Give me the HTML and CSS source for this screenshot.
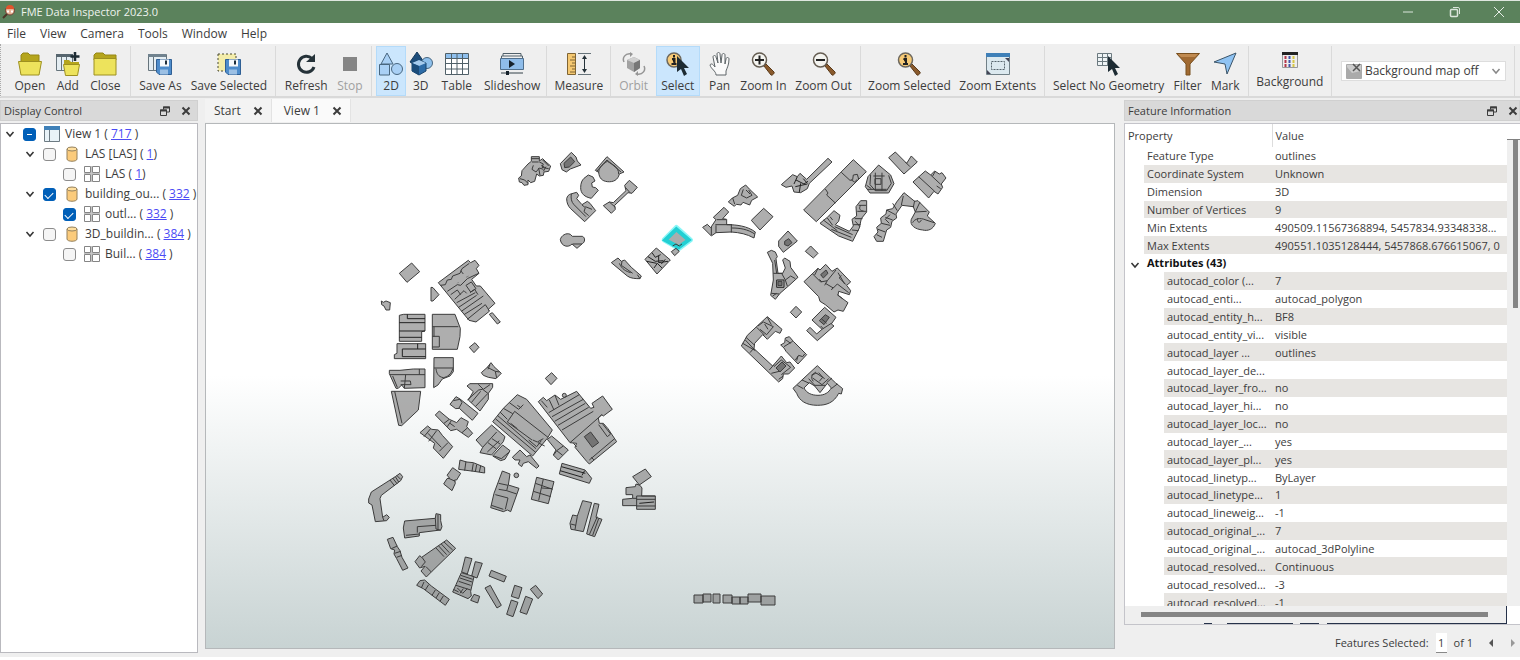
FILE: index.html
```html
<!DOCTYPE html>
<html lang="en">
<head>
  <meta charset="UTF-8">
  <meta name="viewport" content="width=device-width, initial-scale=1.0">
  <title>FME Data Inspector 2023.0</title>
  <link rel="stylesheet" href="styles.css">
</head>
<body>
  <svg class="defs" aria-hidden="true">
    <symbol id="i-close" viewBox="0 0 10 10"><path d="M1.5 1.5l7 7M8.500 1.500l-7 7" fill="none" stroke="currentColor" stroke-width="2"/></symbol>
    <symbol id="i-float" viewBox="0 0 10 10"><path d="M3.500 3.500V1h6v5H7" fill="none" stroke="currentColor"/><path d="M3 1.500h7" stroke="currentColor" stroke-width="2"/><path d="M.5 4h6v5.500h-6z" fill="none" stroke="currentColor"/><path d="M0 4.500h7" stroke="currentColor" stroke-width="2"/></symbol>
    <symbol id="i-chevron" viewBox="0 0 10 10"><path d="M1.500 3l3.500 4 3.500-4" fill="none" stroke="currentColor" stroke-width="1.500"/></symbol>
    <symbol id="i-view" viewBox="0 0 16 16"><path d="M.5.5h15v15H.5z" fill="#e9f3f8" stroke="#6d7b83"/><path d="M0 0h16v4H0z" fill="#3f80b8"/><path d="M5.500 4v11" stroke="#6d7b83"/></symbol>
    <symbol id="i-db" viewBox="0 0 12 16"><path d="M1 3v10c0 3 10 3 10 0V3" fill="#fbcb7c" stroke="#94805c"/><ellipse cx="6" cy="3" rx="5" ry="2" fill="#ffdf9f" stroke="#94805c"/></symbol>
    <symbol id="i-type" viewBox="0 0 16 16"><path d="M.5.5h6v6h-6zM8.500.5h7v6h-7zM.5 8.500h6v7h-6zM8.500 8.500h7v7h-7z" fill="#fff" stroke="#858585"/><path d="M7.500 0v16M0 7.500h16" stroke="#c4c4c4"/></symbol>
    <symbol id="i-floppy" viewBox="0 0 16 16"><path d="M.5.5h15v15H3l-2.500-2.500z" fill="#4e8ccb" stroke="#2f5f94"/><path d="M4 .5h9v7H4z" fill="#f5f8fb"/><path d="M9 1.500h2v4H9z" fill="#1c2d3c"/><path d="M4 10.500h8v5H4z" fill="#9cc0e4"/></symbol>
    <symbol id="i-handle" viewBox="0 0 24 24"><path d="M13 14l2-2 8 8c1 1-2 4-3 3z" fill="#8a5a2c" stroke="#5a3a1a"/></symbol>
    <symbol id="i-cursor" viewBox="0 0 24 24"><path d="M11 4v16l4-3 3 7 3-2-3-6h5z" fill="#1d2b33"/></symbol>
  </svg>

  <div class="app">
    <header class="titlebar">
      <svg class="logo" viewBox="0 0 14 14" aria-hidden="true"><path d="M1 13l5-5" stroke="#4b3526" stroke-width="2"/><circle cx="8" cy="5.500" r="4.500" fill="#e9b295" stroke="#694134"/><path d="M4 4a4 4 0 0 1 8 0z" fill="#e2552d"/><path d="M5 6.500h2M9 6.500h2" stroke="#fff" stroke-width="2"/></svg>
      <h1>FME Data Inspector 2023.0</h1>
      <div class="window-buttons">
        <button aria-label="Minimize"><svg viewBox="0 0 12 12"><path d="M1 6h10" stroke="#dbe5db"/></svg></button>
        <button aria-label="Restore"><svg viewBox="0 0 12 12"><rect x="1.500" y="3.500" width="7" height="7" rx="1" fill="none" stroke="#dbe5db" stroke-width="1.500"/><path d="M4 1.500h5a1.500 1.500 0 0 1 1.500 1.500v5" fill="none" stroke="#dbe5db"/></svg></button>
        <button aria-label="Close window"><svg viewBox="0 0 12 12"><path d="M1 1l10 10M11 1L1 11" stroke="#e6eee6"/></svg></button>
      </div>
    </header>

    <nav class="menubar">
      <a href="#">File</a>
      <a href="#">View</a>
      <a href="#">Camera</a>
      <a href="#">Tools</a>
      <a href="#">Window</a>
      <a href="#">Help</a>
    </nav>

    <div class="toolbar">
      <div class="group">
        <button class="tool"><svg viewBox="0 0 24 24"><path d="M3 10V3l2-2h5l2 2h9v8z" fill="#b5a51c" stroke="#958715"/><path d="M.5 9.500h23L21 23H3z" fill="#ede35c" stroke="#9d9020"/></svg>Open</button>
        <button class="tool"><svg viewBox="0 0 24 24"><path d="M.5 2.500h16v16H.5z" fill="#e4edf2" stroke="#66747c"/><path d="M0 2h17v3H0z" fill="#56656e"/><path d="M5.500 5v13M10.500 5v13" stroke="#66747c"/><path d="M8 12V8h5l2 2h8v4z" fill="#b5a51c"/><path d="M7.500 12.500h16l-2 11h-12z" fill="#ede35c" stroke="#9d9020"/><path d="M19 0v9M14.500 4.500h9" stroke="#1d2b33" stroke-width="2.500"/></svg>Add</button>
        <button class="tool"><svg viewBox="0 0 24 24"><path d="M1 8V3l2-2h7l2 2h11v5z" fill="#b5a51c" stroke="#958715"/><path d="M1 6.500h22V23H1z" fill="#ede35c" stroke="#9d9020"/></svg>Close</button>
      </div>
      <div class="group">
        <button class="tool"><svg viewBox="0 0 24 24"><path d="M.5 2.500h18v16H.5z" fill="#e4edf2" stroke="#66747c"/><path d="M0 2h18v3H0z" fill="#70828e"/><path d="M5.500 5v13" stroke="#66747c"/><use href="#i-floppy" x="8" y="7" width="16" height="16"/></svg>Save As</button>
        <button class="tool"><svg viewBox="0 0 24 24"><path d="M1 2h18v17H1z" fill="#f3ecaa" stroke="#4b4b30" stroke-dasharray="2 2"/><use href="#i-floppy" x="8" y="7" width="16" height="16"/></svg>Save Selected</button>
      </div>
      <div class="group">
        <button class="tool"><svg viewBox="0 0 24 24"><path d="M18 6.500A8 8 0 1 0 20 15" fill="none" stroke="#253239" stroke-width="3"/><path d="M12 10h9V2z" fill="#253239"/></svg>Refresh</button>
        <button class="tool" disabled><svg viewBox="0 0 24 24"><path d="M5 5h14v14H5z" fill="#858585"/></svg>Stop</button>
      </div>
      <div class="group group-view">
        <button class="tool tool-narrow selected"><svg viewBox="0 0 24 24"><g fill="#a9d0f5" stroke="#48667f"><path d="M8 1l6 11H2zM.5 12.500h10V23H.5z"/><circle cx="18" cy="17" r="5.500"/></g></svg>2D</button>
        <button class="tool tool-narrow"><svg viewBox="0 0 24 24"><path d="M8 0L1 10l5 3 9-3z" fill="#1d4d7b" stroke="#163a5c"/><circle cx="18" cy="11" r="5.500" fill="#8ec0ec" stroke="#48667f"/><path d="M3 11l7-3 7 3v8l-7 4-7-4z" fill="#2d6ca8" stroke="#18446c"/><path d="M3 11l7-3 7 3-7 3z" fill="#a6cbed"/><path d="M10 14v9l-7-4v-8z" fill="#1b4c7a"/></svg>3D</button>
        <button class="tool"><svg viewBox="0 0 24 24"><path d="M.5 1.500h23v21H.5z" fill="#fff" stroke="#506068"/><path d="M1 2h22v4H1z" fill="#8fc0ee"/><path d="M0 6.500h24M0 11.500h24M0 17h24M6.500 1v22M12 1v22M17.500 1v22" stroke="#506068"/></svg>Table</button>
        <button class="tool"><svg viewBox="0 0 24 24"><path d="M3 4V1.500h18V4M1.500 6V4h21v2" fill="none" stroke="#50606a"/><path d="M.5 6.500h23v11H.5z" fill="#8fbdea" stroke="#50708e"/><path d="M9 8l6 4-6 4z" fill="#16222c"/><path d="M1 21h22" stroke="#334048"/><path d="M6 19h3v4H6z" fill="#16222c"/></svg>Slideshow</button>
      </div>
      <div class="group">
        <button class="tool"><svg viewBox="0 0 24 24"><path d="M.5 1.500h8v21h-8z" fill="#f5c871" stroke="#7f6434"/><path d="M5 5h4M3 8h6M5 11h4M3 14h6M5 17h4M3 20h6" stroke="#7f6434"/><path d="M11 1.500h13M11 22.500h13" stroke="#66737a"/><path d="M17.500 5v14" stroke="#253239"/><path d="M15 7l2.500-4L20 7zM15 17l2.500 4 2.500-4z" fill="#253239"/></svg>Measure</button>
      </div>
      <div class="group group-camera">
        <button class="tool" disabled><svg viewBox="0 0 24 24"><path d="M2 10C0 6 3 1 9 2M22 14c2 4-1 9-7 8" fill="none" stroke="#959595" stroke-width="1.500"/><path d="M8 0l3 2-3 3zM16 19l-3 3 3 2z" fill="#959595"/><path d="M5 8l7-3 6 3v8l-6 4-7-4z" fill="#a2a2a2"/><path d="M5 8l7-3 6 3-6 3z" fill="#d0d0d0"/><path d="M12 11v9l6-4V8z" fill="#777"/></svg>Orbit</button>
        <button class="tool selected"><svg viewBox="0 0 24 24"><circle cx="8" cy="8" r="7" fill="#f7ca76" stroke="#6d685e" stroke-width="1.500"/><path d="M8 3v2.500M6 7h2.500v5M5.500 12h5" stroke="#222" stroke-width="2"/><use href="#i-cursor" width="24" height="24"/></svg>Select</button>
        <button class="tool"><svg viewBox="0 0 24 24"><path d="M8 23c0-4-5-6-6-10 1-2 3-1 5 2L5 5c0-2 3-2 3 0l2 6-1-9c0-2 3-2 3 0l1 9 1-8c0-2 3-2 3 0v9l1-5c0-2 3-2 3 0 0 6-2 9-3 12v4z" fill="#fafafa" stroke="#5e6568"/></svg>Pan</button>
        <button class="tool"><svg viewBox="0 0 24 24"><use href="#i-handle" width="24" height="24"/><circle cx="8.500" cy="8" r="7" fill="#f4f4f0" stroke="#655d52" stroke-width="1.500"/><path d="M4 8h9M8.500 3.500v9" stroke="#222" stroke-width="2"/></svg>Zoom In</button>
        <button class="tool"><svg viewBox="0 0 24 24"><use href="#i-handle" width="24" height="24"/><circle cx="8.500" cy="8" r="7" fill="#f4f4f0" stroke="#655d52" stroke-width="1.500"/><path d="M4 8h9" stroke="#222" stroke-width="2"/></svg>Zoom Out</button>
      </div>
      <div class="group">
        <button class="tool"><svg viewBox="0 0 24 24"><use href="#i-handle" width="24" height="24"/><circle cx="8.500" cy="8" r="7" fill="#f7ca76" stroke="#6d685e" stroke-width="1.500"/><path d="M8.500 3v2.500M6.500 7H9v5M6 12h5" stroke="#222" stroke-width="2"/></svg>Zoom Selected</button>
        <button class="tool"><svg viewBox="0 0 24 24"><path d="M.5 1.500h23v21H.5z" fill="#dce9ef" stroke="#718087"/><path d="M0 1h24v4H0z" fill="#3f80b8"/><path d="M5.500 9.500h13v8h-13z" fill="none" stroke="#56646c" stroke-dasharray="2 1"/><path d="M19 6h4v4zM1 18v4h4z" fill="#445"/></svg>Zoom Extents</button>
      </div>
      <div class="group">
        <button class="tool"><svg viewBox="0 0 24 24"><path d="M.5 1.500h14v12H.5z" fill="#eef3f5" stroke="#6b797f"/><path d="M0 5.500h15M0 9.500h15M5.500 1v12M10.500 1v12" stroke="#6b797f"/><use href="#i-cursor" width="24" height="24"/></svg>Select No Geometry</button>
        <button class="tool"><svg viewBox="0 0 24 24"><path d="M.5 1.500h23L14 12v11h-4V12z" fill="#a16a32" stroke="#79501f"/><path d="M2 2h20l-3 3H5z" fill="#c08a50"/></svg>Filter</button>
        <button class="tool"><svg viewBox="0 0 24 24"><path d="M1 10L23 1l-9 21-2-10z" fill="#8fc3f3" stroke="#3c5569" stroke-linejoin="round"/></svg>Mark</button>
      </div>
      <div class="group">
        <button class="tool tool-small"><svg viewBox="0 0 16 16"><path d="M.5.5h15v15H.5z" fill="#eee" stroke="#999"/><path d="M0 0h16v3H0z" fill="#222"/><path d="M3.500 4v12" stroke="#b43548" stroke-width="2" stroke-dasharray="3 1"/><path d="M7.500 4v12" stroke="#4054a8" stroke-width="2" stroke-dasharray="3 1"/><path d="M11.500 4v12" stroke="#d6c543" stroke-width="2" stroke-dasharray="3 1"/></svg>Background</button>
      </div>
      <div class="group">
        <label class="map-select">
          <svg class="map-icon" viewBox="0 0 16 16" aria-hidden="true"><path d="M.5 1.500h15v14H.5z" fill="#ccc" stroke="#aaa"/><path d="M1 4l5 6 9-2v7H1z" fill="#aaa"/><path d="M7 1l7 7M14 1L7 8" stroke="#555" stroke-width="1.500"/></svg>
          <select aria-label="Background map">
            <option>Background map off</option>
          </select>
          <svg class="arrow" aria-hidden="true"><use href="#i-chevron"/></svg>
        </label>
      </div>
    </div>

    <main class="workspace">
      <section class="dock dock-left">
        <div class="dock-title">
          <h2>Display Control</h2>
          <button aria-label="Float"><svg><use href="#i-float"/></svg></button>
          <button aria-label="Close panel"><svg><use href="#i-close"/></svg></button>
        </div>
        <ul class="tree">
          <li>
            <div class="node"><svg class="arrow"><use href="#i-chevron"/></svg><input type="checkbox" class="partial" id="n1"><svg class="icon"><use href="#i-view"/></svg><label for="n1">View 1 ( <a href="#">717</a> )</label></div>
            <ul>
              <li>
                <div class="node"><svg class="arrow"><use href="#i-chevron"/></svg><input type="checkbox" id="n2"><svg class="icon"><use href="#i-db"/></svg><label for="n2">LAS [LAS] ( <a href="#">1</a>)</label></div>
                <ul>
                  <li><div class="node leaf"><input type="checkbox" id="n3"><svg class="icon"><use href="#i-type"/></svg><label for="n3">LAS ( <a href="#">1</a>)</label></div></li>
                </ul>
              </li>
              <li>
                <div class="node"><svg class="arrow"><use href="#i-chevron"/></svg><input type="checkbox" id="n4" checked><svg class="icon"><use href="#i-db"/></svg><label for="n4">building_ou... ( <a href="#">332</a> )</label></div>
                <ul>
                  <li><div class="node leaf"><input type="checkbox" id="n5" checked><svg class="icon"><use href="#i-type"/></svg><label for="n5">outl... ( <a href="#">332</a> )</label></div></li>
                </ul>
              </li>
              <li>
                <div class="node"><svg class="arrow"><use href="#i-chevron"/></svg><input type="checkbox" id="n6"><svg class="icon"><use href="#i-db"/></svg><label for="n6">3D_buildin... ( <a href="#">384</a> )</label></div>
                <ul>
                  <li><div class="node leaf"><input type="checkbox" id="n7"><svg class="icon"><use href="#i-type"/></svg><label for="n7">Buil... ( <a href="#">384</a> )</label></div></li>
                </ul>
              </li>
            </ul>
          </li>
        </ul>
      </section>

      <section class="view">
        <div class="tabs">
          <div class="tab"><a href="#">Start</a><button aria-label="Close Start"><svg><use href="#i-close"/></svg></button></div>
          <div class="tab active"><a href="#">View 1</a><button aria-label="Close View 1"><svg><use href="#i-close"/></svg></button></div>
        </div>
        <div class="canvas">
          <svg class="map" viewBox="206 124 908 524" role="img" aria-label="Building outlines">
            <!-- north -->
            <g transform="translate(500 140) scale(.3333)">
              <path class="b" d="M94 50L118 50L118 63L128 56L138 66L152 78L146 94L132 96L130 106L118 108L110 102L104 124L92 128L84 120L84 134L72 136L66 128L58 126L56 114L64 108L66 92L84 72L94 64z"/>
              <path class="l" d="M94 56h24M96 66h20M118 66l12 6-4 10 20 4M100 76l-4 12 12 8 10-12 12 4M116 84l4 22M128 60l18 18M130 94l8-14M60 116l14 4 10 10M124 76l10 6"/>
              <path class="b" d="M181 71l33-34 14 14 4 12 11 12-32 12-12 9-13-7z"/><path class="d" d="M192 70l20-19 12 14-16 16-14 2z"/>
              <path class="b" d="M286 91l35-41 51 46-14 6c-4 18-18 25-36 23-16-2-24-10-26-28z"/>
              <path class="l" d="M290 94l31-34 42 36M296 98c0-12 8-24 26-34 16 10 34 16 34 38"/>
              <path class="b" d="M252 115l13-10 14 6 6 12-10 6 2 12 10 2 8 8-21 24c-20-4-32-14-32-32 0-14 4-22 10-28z"/>
              <path class="b" d="M200 176C202 168 206 164 212 162L230 157L236 166L230 176L246 194L262 184L270 190L287 212L254 245L212 206C204 198 200 188 200 176z"/>
              <path class="l" d="M214 162c-2 12 0 24 8 32l36 36M246 195l10 8-4 12 14 12M256 200l20 8"/>
              <path class="b" d="M310 197L328 186L340 188L378 152L374 136L388 121L412 142L396 160L384 158L344 196L346 208L334 220z"/>
              <path class="l" d="M328 186l18 16M376 142l14 16"/>
              <path class="b" d="M181 299C183 287 199 277 211 283L217 289L247 289C257 293 255 307 247 311L231 325L216 312C206 324 184 320 181 299z"/>
              <path class="l" d="M218 312h28"/>
              <path class="glow" d="M492 300l37-38 43 38-35 26z"/>
              <path class="pick" d="M496 300l33-32 37 32-30 22z"/>
              <path class="b" d="M514 335l14-10 10 9-14 13z"/>
              <path class="l" d="M518 318l10-6 10 6 8-6"/>
              <path class="b" d="M435 358l34-34 42 36-40 42z"/>
              <path class="l edge" d="M444 350l22 14 24-2M456 338l10 14 16-8M440 364l30 6M476 348v20l28-4M484 372l12-14M462 384l10-14 14 14"/>
              <path class="b" d="M334 368L354 354L364 364L374 360L394 382L424 408L420 416C408 416 392 416 382 408z"/>
              <path class="l" d="M358 370c8 18 20 24 34 28M366 364l-2 12 34 24M412 404l8 12"/>
            </g>
            <!-- north east -->
            <g transform="translate(690 140) scale(.3333)">
              <path class="b" d="M274 134L308 104L322 110L330 100L350 118L414 55L426 66L358 130L352 146L332 158L312 156L306 138L288 142z"/>
              <path class="l edge" d="M322 110l-10 22M318 120l24 12 12-8M316 140l36-8M332 130l-4 26M340 116l12 14"/>
              <path class="b" d="M341 210l149-151 39 36-150 150z"/>
              <path class="l" d="M406 147l8 12-4 6 26 24M454 97l26 24 8-2 2-14 12-2 4 14M484 120l10 6 8-8"/>
              <path class="b" d="M526 140l8-30 32-35 36 30 10 26-16 28h-56z"/>
              <path class="l" d="M542 104l-2 30 16 18h34l14-22-8-24M556 98v54M576 98v54M550 108h34M555 116h18v17h-18zM532 148h58M530 136l14 10"/>
              <path class="b" d="M596 53l20-17 34 34 14-22 18 18-40 36z"/><path class="l" d="M646 66l14 14"/>
              <path class="b" d="M669 126L706 93L722 105L734 93L748 102L756 98L768 114L754 132L758 142L744 162L732 154L716 174z"/>
              <path class="l" d="M686 110l48 44M722 105l30 28M736 94l-8 14M740 138l12 8"/>
              <path class="b" d="M115 186l12-12 16-8 8-20 16-11 12 13 24 23-18 10-6 14-20-8-6 8-14-2-6 6z"/>
              <path class="l" d="M128 174l6 18M160 148l-6 18 16 8 16-8-10-16M168 150l12 12"/>
              <path class="b" d="M184 241l37-36 28 25-39 40z"/>
              <path class="b" d="M38 262L52 253L62 263L78 239L70 232L102 202L116 216L98 236L110 238L110 254C140 254 172 258 196 276L192 294C170 282 150 278 124 276L78 278L64 288z"/>
              <path class="l" d="M80 239h28M76 254h50M78 256v22M124 254v24M126 264c24 0 48 4 68 18M64 261v24"/>
              <path class="b" d="M390 250L412 232L432 212L450 226L446 244L436 254L478 274L490 258L486 238L500 228L498 200L512 182L530 182L530 216L514 236L508 264L488 304L446 288z"/>
              <path class="l" d="M400 240l42 32M412 234l16 22M434 260l54 24M424 268l60 24M506 196h22M502 214h26M494 236h24M490 254h22M486 270l20 2M512 196c-8 12 2 18 8 16M496 244l14 16M420 230l8 10"/>
              <path class="b" d="M552 290L564 276L560 262L574 250L572 234L588 222L590 210L608 206L620 186L642 158L674 184L684 182L718 216L712 228L736 250C730 268 714 274 698 270C676 268 658 256 664 238L676 216L670 200L636 196L618 222L620 234L606 244L602 262L590 270L580 304L560 304z"/>
              <path class="l" d="M608 190l14 22M640 168l-6 28M674 182l-4 20M690 186l-14 30 34-2M590 210l26 14M586 232l22 8M574 250l26 6M564 268l22 8M560 284l16 8M600 224l-14 14 12 12M668 248c6-12 22-16 40-8l24 8M684 234c-6 12 6 18 10 6"/>
            </g>
            <!-- east -->
            <g transform="translate(730 230) scale(.3333)">
              <path class="b" d="M146 33l28-30 28 30-42 34-14-18z"/><path class="d" d="M164 34l12-8 10 12-12 10-10-4z"/>
              <path class="b" d="M226 64l16-16 22 22-14 14z"/>
              <path class="b" d="M112 67L124 61L136 66L142 80L138 86L144 130L158 130L166 114L158 90L164 84L180 94L182 112L204 142L180 164L150 190L136 208L122 196L130 150L128 100z"/>
              <path class="l" d="M130 130h28M134 90l6 40M124 190l24 2M166 150l6 18M156 132l10 18 16-12 14 8M128 198l12-8"/>
              <path class="l edge" d="M140 150h22v22h-22z"/><path class="d" d="M144 154h12v13h-12z"/>
              <path class="b" d="M222 155L264 115L270 120L287 103L306 124L322 114L362 156L350 166L362 182L358 194L326 184L324 196L354 218L340 244L324 240L312 246L286 224L270 214L266 200z"/>
              <path class="l" d="M248 132l24 24 20-4M264 115l-10 20M292 152l26-32M286 160l24 14 12-12 34 26M292 152l-8 14M324 128l20 34M334 136l-6 8 20 20M310 172l-6 8M338 206l-16-12M268 148l8 8"/>
              <path class="d" d="M272 134l16-14 6 10-14 14z"/>
              <path class="b" d="M246 270L284 232L318 262L304 282L312 288L262 332L230 302L240 292L260 312L276 298z"/>
              <path class="d" d="M268 272l18-18 12 8-16 22z"/><path class="l" d="M276 298l28-18M272 288l8 8M274 266l16 14"/>
              <path class="b" d="M181 247l17-18 17 17-17 18z"/>
              <path class="b" d="M34 348L52 316L84 286L112 260L156 298L150 310L136 304L112 328L98 314L74 340L72 356L128 408L154 378L170 398L180 396L194 414L176 432L160 432L158 446L146 456z"/>
              <path class="l" d="M48 322l24 22M80 292l24 24M84 288l16-12 30 14-20 24-20-16M104 282l10 16M112 262l12 22M38 340l38 22M46 330l28 30M60 368l12-14M124 430l24-6M118 420l14-16M132 410l22-20 28 22-28 22M146 448l14-10"/>
              <path class="d" d="M138 414l18-18 12 12-18 18z"/>
              <path class="b" d="M152 345L164 338L166 324L178 320L190 334L230 374L204 402L168 364L162 354z"/><path class="l" d="M162 350l26-16M168 330l14 10M196 390l10-14 12 4 6-8M204 378l-4 14"/>
              <path class="b" fill-rule="evenodd" d="M189 475L262 407L316 458L338 476L334 492L326 490C312 518 290 526 262 526C228 526 208 512 200 490zM222 474C230 490 246 496 264 496C284 496 296 488 304 474L292 460L270 488L254 468L238 458z"/>
              <path class="l" d="M202 466l18 10M216 450l22 10M304 476l18-14M290 458l16-14M236 446l18 20M262 430c-16 0-22 12-12 24M248 444l28 20 20-18M260 430l24 16M268 454l10-12-12-14M252 466h34M244 436l14-10"/>
            </g>
            <!-- west -->
            <g transform="translate(360 250) scale(.3333)">
              <path class="b" d="M118 70l37-31 24 26-38 32zM64 153l6 4 8-4 13 5-2 22H78l-6-12-7-4zM213 112l6 1 18 21-18 19h-6z"/>
              <path class="b" d="M235 98l90-67 7 7 13-7 12 15-8 10 8 14-22 18 14 20h12l44 52-20 18 3 6-40 32-21-5z"/>
              <path class="l" d="M242 106l14-2 6-14 12-2 4-10 22-8 6-14 22-16M262 124l30-20 10 2 20-20 34-16M302 62l8 10M272 134l20-14 10 14M284 148l28-26 8 8M290 158l56-30M296 172l54-36M304 184l66-46M312 194l54-34M322 208l54-44 12 18M318 106l16-10 14 20-16 10zM330 128l14-10 10 16"/>
              <path class="edge" d="M318 82l8-4M292 100l4-4"/>
              <path class="b" d="M388 193l9-5 24 28-9 6zM118 196l13-3h64v50l-10 2v29h-67z"/>
              <path class="l edge" d="M118 218h77M118 243h77M142 193v13h53M118 262h67"/>
              <path class="b" d="M217 193h68l16 42-1 25-8 38h-75z"/><path class="l" d="M217 230h78M222 230v30M217 259h21v32h-21"/>
              <path class="b" d="M111 281h86v45h-94v-12l8-4z"/><path class="l edge" d="M197 297h-70v23h70M173 281v16"/>
              <path class="b" d="M222 323h58v42l-10 13-23 9-13 18-13 8z"/><path class="l" d="M222 354h58M228 356c2 14 6 24 22 27 12-2 24-10 28-27"/>
              <path class="b" d="M88 361h32l40-4h35v56l-62 2-8-10-10 10h-7l-20-44z"/><path class="l" d="M90 374h105M178 357v17M137 374l-4 41M122 393h29l2 11h-31M98 378l14 34"/>
              <path class="b" d="M94 424h88l-7 56-50 47-9-1z"/><path class="l" d="M104 424l22 96"/>
              <path class="b" d="M328 292l17-14 12 14-15 16zM364 368l18-16 11-14 9 12 22 20-16 16-23-4-15-6z"/><path class="l" d="M382 352l24 12 4 20M390 344l-6 14M406 364l12 2"/>
              <path class="b" d="M321 408l9-7h68v11l-13 18v18l-25 35-35-33 15-25z"/><path class="l" d="M322 450l34-30 12-2 18 14M355 403l15 15 20-14M334 458l28-34M346 470l36-38"/>
              <path class="b" d="M270 463l18-23 12 7 54 43-17 21-39-36-11 1z"/><path class="l" d="M280 452l20-4 6 10-10 18"/>
              <path class="b" d="M226 495l12-12 30 25 22 10 13-15 22 12-5 15 18 20-13 12-35-24-18 4z"/><path class="l" d="M252 520l16-12M262 530l12-18M270 520l14 10M306 548l16-14"/>
              <path class="b" d="M180 548l23-20 12 10 20 2 12 16 31 34-28 35-30-31 4-14z"/><path class="l" d="M192 560l20-24M206 574l24-32M204 550l40 42M238 604l26-26"/>
            </g>
            <!-- centre -->
            <g transform="translate(470 360) scale(.3333)">
              <path class="b" d="M226 55l19-17 16 17-18 19z"/>
              <path class="b" d="M68 185l32-40 42-41 28 14 77 92-15 25-44 53z"/>
              <path class="l" d="M76 176l122 102M82 166l116 100M112 186l22-32 100 78M112 186l74 54M90 156l22 22M100 145l28 16M118 128l28 20 14-14M142 136l12 8M176 240l24 20 14-18M122 190l20 16M204 248l20 10M188 240l14 6 18-10"/>
              <path class="b" d="M232 238l13-10 50 42-30 30-15-15 8-15z"/><path class="l" d="M252 284l8-12 20-14M260 272l18 14"/>
              <path class="b" d="M18 240l47-45 40 35-5 15-35 40-35-7 8-16z"/><path class="l" d="M38 262l42-46M52 276l36-34M66 236l24 16M54 248l24 18"/>
              <path class="b" d="M68 288l30-33 22 17-15 26-13 4zM127 292l23-22 20 20 10-5 27 33-7 7-25-20-15 5-5 10-10-8 5-12h-15z"/><path class="l" d="M72 288l22 8 24-20"/>
              <path class="b" d="M205 125L220 112L230 122L255 105L272 118L320 94L362 145L372 142L366 130L398 108L427 148L400 168L395 164L385 174L388 190L400 190L414 206L440 245L358 312L350 304L315 262L320 250L300 248z"/>
              <path class="d" d="M343 230l19-14 24 32-19 14z"/>
              <path class="l" d="M236 158l92-54M246 170l94-52M254 184l92-54M264 196l92-54M276 210l94-56M300 248l96-84M214 122l18 20M238 120l14 30M255 106l12 30M386 194l26 36 10-8-24-30M358 300l76-64M310 250l10 10M364 292l8 8"/>
              <circle class="b" cx="283" cy="106" r="6"/><circle class="b" cx="139" cy="346" r="7"/>
              <path class="b" d="M276 310l69 20 20 25-7 15-90-28z"/><path class="l edge" d="M274 320l72 20M270 332l68 20M336 346l8-14"/>
              <path class="b" d="M97 333l23 9-5 33 32 10-25 70-10-5-12 5-38-12 10-43z"/><path class="l" d="M86 370l28 6-4 16-24-4M110 392l30 10M76 404l38 10-8 34M64 436l36 12"/>
              <path class="b" d="M200 352l52 13-17 66-51-13z"/><path class="l" d="M220 357l-14 64M196 370l52 18M190 394l52 16M216 384l30 2"/>
              <path class="b" d="M338 422L365 428L340 515L315 510L303 508L300 490L308 465L322 468zM373 430L387 433L378 472L396 478L374 530L350 522z"/><path class="l" d="M322 469l-7 40M302 492l16 4M382 470l-24 54M386 476l-18 50"/>
              <path class="b" d="M488 350l38-23 18 23-36 25zM468 383l28-3 2-8 12 4 6 8-1 24h41v40h-56v-11h-42v-19l30-3v-11h-20z"/><path class="l" d="M500 408h56M500 438h56M500 408v30M488 415h12M500 418h56"/><path class="l edge" d="M508 430l44-4"/>
            </g>
            <!-- south west -->
            <g transform="translate(350 450) scale(.3333)">
              <path class="b" d="M64 126l72-46 14-10 8 10-6 12-58 44-4 10 8 56 12-8 8 8-8 10-34 3-10-50-10-6v-12z"/><path class="l" d="M120 90l14 18M128 84l14 18M136 80l10 16M140 76l12 12M98 202l4 10"/>
              <path class="b" d="M330 30l20 6 20 2 34 14v17l-32-5-46-6zM291 76l17-23 24 17-12 20h-6l2 10-10 22-25-20 10-16 8-2z"/><path class="l" d="M348 34l-4 28M370 40l-4 24M380 44l-4 22M392 48l-4 18M294 84l22 10"/>
              <path class="b" d="M164 213l92-8 2-14 14 3v18l4 18-4 10-64 8v10l-44 6-4-30z"/><path class="l" d="M256 205l2 32 14 4M202 248v-18l56-4M168 256l40-4M264 194v46"/>
              <path class="b" d="M112 268L129 262L142 290L150 302L156 322L174 354L158 361L140 326L132 312L134 300L122 296z"/><path class="l" d="M124 296l18-8M134 310l18-6M140 322l16-6"/>
              <path class="b" d="M195 335l14-18 6 5 75-52 27 25-72 70-16 16-16-18 12-14-16 5z"/><path class="l" d="M274 282l24 26M266 288l24 26M258 294l24 26M282 276l26 24M216 322l10 14-12 14M228 350l16 16"/>
              <path class="b" d="M200 406L210 392L224 390L244 408L298 448L286 466L220 416z"/><path class="l" d="M222 396l-8 18M236 404l-10 16M256 420l-10 16M268 428l-10 16M280 438l-10 16"/>
              <path class="b" d="M346 321l20 5-14 46-17-6zM376 335l21 5-16 44-16-6z"/>
              <path class="b" d="M334 368l38 12-10 44 2 14-10 8-46-20 10-22z"/><path class="l" d="M332 376l36 12M330 384l36 12M326 394l36 12M318 406l44 14M322 414l16 16 14-14M310 418l16 8M330 430l10-14"/>
              <path class="b" d="M372 433l17 6-6 20-21-8zM424 361l45 18-7 17-45-18zM405 414l16-8 33 60-13 8zM494 406l22 7-10 33-22-7zM484 450l20 7-15 43-19-7zM527 439l21 8-18 46-20-7zM541 418l16-12 21 26-14 14z"/>
            </g>
            <!-- south row -->
            <path class="b" d="M694 595h9v8h-9zM703 594h8v8h-8zM713 594h7v9h-7zM723 595h9v8h-9zM732 597h8v7h-8zM740 597h8v7h-8zM748 594h13v8h-13zM761 596h14v9h-14z"/>
          </svg>
        </div>
      </section>

      <section class="dock dock-right">
        <div class="dock-title">
          <h2>Feature Information</h2>
          <button aria-label="Float"><svg><use href="#i-float"/></svg></button>
          <button aria-label="Close panel"><svg><use href="#i-close"/></svg></button>
        </div>
        <div class="info">
          <div class="info-scroll">
            <table class="properties">
              <thead>
                <tr><th>Property</th><th>Value</th></tr>
              </thead>
              <tbody>
                <tr><td>Feature Type</td><td>outlines</td></tr>
                <tr class="alt"><td>Coordinate System</td><td>Unknown</td></tr>
                <tr><td>Dimension</td><td>3D</td></tr>
                <tr class="alt"><td>Number of Vertices</td><td>9</td></tr>
                <tr><td>Min Extents</td><td>490509.11567368894, 5457834.93348338...</td></tr>
                <tr class="alt"><td>Max Extents</td><td>490551.1035128444, 5457868.676615067, 0</td></tr>
                <tr class="section"><td colspan="2"><svg class="arrow"><use href="#i-chevron"/></svg>Attributes (43)</td></tr>
              </tbody>
              <tbody class="attributes">
                <tr class="alt"><td>autocad_color (...</td><td>7</td></tr>
                <tr><td>autocad_enti...</td><td>autocad_polygon</td></tr>
                <tr class="alt"><td>autocad_entity_h...</td><td>BF8</td></tr>
                <tr><td>autocad_entity_vi...</td><td>visible</td></tr>
                <tr class="alt"><td>autocad_layer ...</td><td>outlines</td></tr>
                <tr><td>autocad_layer_de...</td><td></td></tr>
                <tr class="alt"><td>autocad_layer_fro...</td><td>no</td></tr>
                <tr><td>autocad_layer_hi...</td><td>no</td></tr>
                <tr class="alt"><td>autocad_layer_loc...</td><td>no</td></tr>
                <tr><td>autocad_layer_...</td><td>yes</td></tr>
                <tr class="alt"><td>autocad_layer_pl...</td><td>yes</td></tr>
                <tr><td>autocad_linetyp...</td><td>ByLayer</td></tr>
                <tr class="alt"><td>autocad_linetype...</td><td>1</td></tr>
                <tr><td>autocad_lineweig...</td><td>-1</td></tr>
                <tr class="alt"><td>autocad_original_...</td><td>7</td></tr>
                <tr><td>autocad_original_...</td><td>autocad_3dPolyline</td></tr>
                <tr class="alt"><td>autocad_resolved...</td><td>Continuous</td></tr>
                <tr><td>autocad_resolved...</td><td>-3</td></tr>
                <tr class="alt"><td>autocad_resolved...</td><td>-1</td></tr>
              </tbody>
            </table>
          </div>
          <div class="vbar"><div class="thumb"></div></div>
          <div class="hbar"><div class="thumb"></div></div>
        </div>
        <footer class="statusbar">
          <label for="feature-no">Features Selected:</label>
          <input id="feature-no" type="text" value="1">
          <span>of 1</span>
          <button aria-label="Previous feature"><svg viewBox="0 0 8 8"><path d="M6 0v8L2 4z" fill="#555"/></svg></button>
          <button aria-label="Next feature" disabled><svg viewBox="0 0 8 8"><path d="M2 0v8l4-4z" fill="#999"/></svg></button>
        </footer>
      </section>
    </main>
  </div>
</body>
</html>
```

FILE: styles.css
```css
* {
  box-sizing: border-box;
}
body {
  margin: 0;
  background: #fff;
  color: #3c3c3c;
  font-family: "Open Sans", "Noto Sans", sans-serif;
  font-size: 12px;
  line-height: 16px;
}
h1, h2 {
  margin: 0;
  font-size: inherit;
  font-weight: normal;
}
a {
  color: inherit;
  text-decoration: none;
}
button {
  padding: 0;
  border: 0;
  background: none;
  color: inherit;
  font: inherit;
}
button svg {
  display: block;
}
.defs {
  position: absolute;
  width: 0;
  height: 0;
}
.app {
  display: flex;
  flex-direction: column;
  height: 100vh;
  padding-bottom: 3px;
}
.arrow {
  width: 10px;
  height: 10px;
  color: #333;
}

/* title and menu */
.titlebar {
  display: flex;
  align-items: center;
  gap: 5px;
  height: 23px;
  padding-left: 2px;
  border-top: 1px solid #dfe7df;
  background: #5b825c;
  color: #eef3ee;
  font-size: 11px;
}
.titlebar h1 {
  flex: 1;
}
.logo {
  width: 14px;
  height: 14px;
}
.window-buttons {
  display: flex;
}
.window-buttons button {
  display: flex;
  justify-content: center;
  width: 47px;
}
.window-buttons button:last-child {
  width: 42px;
}
.window-buttons svg {
  width: 12px;
  height: 12px;
}
.menubar {
  display: flex;
  gap: 14px;
  padding: 3px 7px 2px;
}

/* toolbar */
.toolbar {
  display: grid;
  grid-template-columns: 126fr 145fr 96fr 175fr 64fr 249fr 184fr 204fr 83fr 183fr;
  padding: 2px 5px 0 4px;
  border-left: 1px dotted #aaa;
  border-bottom: 2px solid #d9d9d9;
  background: #efefef;
}
.group {
  display: flex;
  align-items: stretch;
  justify-content: space-evenly;
  min-width: 0;
  border-right: 1px solid #dadada;
}
.group-view {
  justify-content: flex-start;
  padding-left: 4px;
}
.tool {
  display: flex;
  flex-direction: column;
  align-items: center;
  gap: 2px;
  height: 50px;
  padding-top: 5px;
  border: 1px solid transparent;
  white-space: nowrap;
}
.group-view .tool {
  padding-right: 5px;
  padding-left: 5px;
}
.tool svg {
  flex: none;
  width: 24px;
  height: 24px;
}
.group .tool-narrow {
  width: 31px;
  padding-right: 0;
  padding-left: 0;
}
.tool-small svg {
  width: 16px;
  height: 16px;
}
.tool-small {
  gap: 6px;
}
.tool:disabled {
  color: #a0a0a0;
}
.tool.selected {
  border-color: #b4dbfa;
  background: #cbe6fd;
}
.group-camera .selected {
  width: 44px;
}
.map-select {
  display: flex;
  align-items: center;
  align-self: center;
  flex: 1;
  gap: 3px;
  height: 20px;
  margin: 0 8px 0 9px;
  padding: 0 4px;
  border: 1px solid #ddd;
  background: #fff;
}
.map-icon {
  width: 16px;
  height: 16px;
}
.map-select select {
  flex: 1;
  min-width: 0;
  padding: 0;
  border: 0;
  background: none;
  color: inherit;
  font: inherit;
  appearance: none;
}
.map-select .arrow {
  color: #888;
}

/* docks */
.workspace {
  display: flex;
  flex: 1;
  min-height: 0;
  background: #efefef;
}
.dock {
  display: flex;
  flex-direction: column;
  padding-top: 2px;
}
.dock-left {
  width: 198px;
  padding-bottom: 4px;
}
.dock-right {
  width: 396px;
  font-size: 11px;
}
.dock-title {
  display: flex;
  align-items: center;
  gap: 11px;
  height: 21px;
  margin-bottom: 2px;
  padding: 0 6px 0 3px;
  border: 1px solid #d0d0d0;
  background: #d9d9d9;
  font-size: 11px;
}
.dock-title h2 {
  flex: 1;
}
.dock-right .dock-title {
  padding-right: 1px;
}
.dock-title svg,
.tab svg {
  width: 10px;
  height: 10px;
}

/* layer tree */
.tree {
  flex: 1;
  border: 1px solid #b9b9be;
  background: #fff;
}
.tree,
.tree ul {
  margin: 0;
  padding: 0;
  list-style: none;
}
.tree ul {
  padding-left: 20px;
}
.node {
  display: grid;
  grid-template-columns: 18px 20px 26px auto;
  align-items: center;
  justify-items: center;
  justify-content: start;
  height: 20px;
  white-space: nowrap;
}
.node.leaf {
  grid-template-columns: 20px 26px auto;
  padding-left: 18px;
}
.node .icon {
  width: 16px;
  height: 16px;
}
.node a {
  color: #4b4bf5;
  text-decoration: underline;
}
.node input {
  width: 13px;
  height: 13px;
  margin: 0;
  border: 1px solid #8c8c8c;
  border-radius: 3px;
  background: #f5f5f5;
  appearance: none;
}
.node input:checked,
.node input.partial {
  display: grid;
  place-items: center;
  border-color: #005fb8;
  background: #005fb8;
}
.node input:checked::before {
  content: "";
  width: 7px;
  height: 4px;
  border: solid #fff;
  border-width: 0 0 1px 1px;
  transform: rotate(-45deg);
}
.node input.partial::before {
  content: "";
  width: 5px;
  height: 1px;
  background: #fff;
}

/* map view */
.view {
  display: flex;
  flex: 1;
  flex-direction: column;
  min-width: 0;
  padding: 1px 9px 8px 7px;
}
.tabs {
  display: flex;
  height: 24px;
}
.tab {
  display: flex;
  align-items: center;
  gap: 12px;
  margin-bottom: 1px;
  padding: 0 8px 0 9px;
  border-right: 1px solid #e3e3e3;
  background: #f3f3f3;
}
.tab.active {
  padding-left: 12px;
  background: #fafafa;
}
.canvas {
  flex: 1;
  min-height: 0;
  border: 1px solid #b5b8ba;
  background: linear-gradient(#fff 48%, #c8d3d3);
}
.map {
  display: block;
  width: 100%;
  height: 100%;
}
.b {
  fill: #808080;
  fill-opacity: 0.64;
}
.d {
  fill: #747474;
}
.b, .d, .l {
  stroke: #3c3c3c;
  stroke-width: 1px;
  vector-effect: non-scaling-stroke;
}
.l {
  fill: none;
}
.edge {
  stroke: #222;
}
.glow {
  fill: none;
  stroke: #8af6f7;
  stroke-width: 14;
  stroke-linejoin: round;
}
.pick {
  fill: #a9adad;
  stroke: #22cfd3;
  stroke-width: 12;
}

/* feature information */
.info {
  display: grid;
  grid-template-columns: 1fr 13px;
  grid-template-rows: 1fr 18px;
  flex: 1;
  min-height: 0;
  border: 1px solid #c4c4ca;
  border-right: 0;
  background: #fff;
}
.info-scroll {
  overflow: hidden;
}
.properties {
  width: 100%;
  height: 487px;
  border-collapse: collapse;
  table-layout: fixed;
}
.properties th {
  height: 23px;
  padding: 0 0 0 3px;
  font-weight: normal;
  text-align: left;
}
.properties th:first-child {
  width: 147px;
  border-right: 1px solid #ddd;
}
.properties td {
  overflow: hidden;
  padding: 0 0 0 3px;
  line-height: 15px;
  white-space: nowrap;
}
.properties td:first-child {
  padding-left: 19px;
  background-clip: content-box;
  text-indent: 3px;
}
.properties .attributes td:first-child {
  padding-left: 39px;
}
.properties .section td {
  padding-left: 5px;
  color: #111;
  font-weight: bold;
  text-indent: 0;
}
.section .arrow {
  margin-right: 7px;
  vertical-align: middle;
}
.alt td {
  background-color: #e7e5e2;
}
.vbar {
  margin-top: 15px;
  padding-left: 6px;
  border-top: 1px solid #808080;
  background: #efefef;
}
.vbar .thumb {
  width: 5px;
  height: 36%;
  background: #858585;
}
.hbar {
  padding: 6px 18px 0 16px;
  border-right: 1px solid #808080;
  border-bottom: 1px solid #26324a;
  border-image: linear-gradient(90deg, #efefef 21%, #26324a 21% 23%, #efefef 23% 27%, #26324a 27% 44%, #efefef 44% 46%, #26324a 46% 51%, #efefef 51% 53%, #26324a 53%) 1;
  background: #efefef;
}
.hbar .thumb {
  height: 5px;
  background: #858585;
}

/* status */
.statusbar {
  display: flex;
  align-items: center;
  justify-content: flex-end;
  gap: 7px;
  height: 32px;
  padding: 3px 3px 0 0;
}
.statusbar input {
  width: 11px;
  height: 20px;
  padding: 0;
  border: 0;
  border-bottom: 1px solid #888;
  background: #fff;
  color: inherit;
  font: inherit;
  text-align: center;
}
.statusbar button {
  margin-left: 7px;
}
.statusbar svg {
  width: 8px;
  height: 8px;
}
```
